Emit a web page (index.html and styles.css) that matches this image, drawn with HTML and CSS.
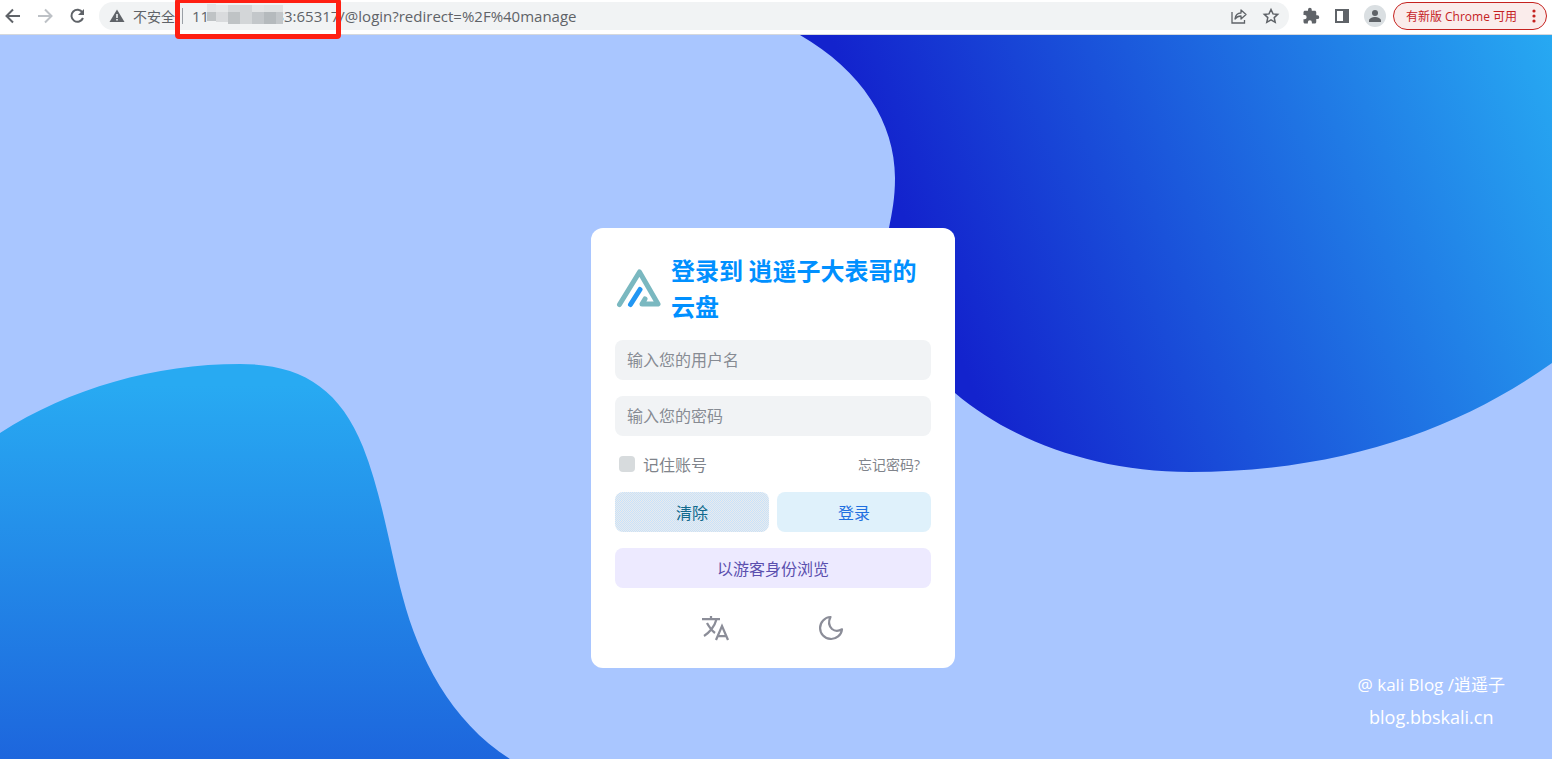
FILE: index.html
```html
<!DOCTYPE html>
<html lang="zh-CN">
<head>
    <meta charset="utf-8">
    <title>登录</title>
    <link rel="stylesheet" href="styles.css">
</head>
<body>
    <header class="toolbar">
        <button type="button" class="tool" aria-label="后退">
            <svg width="20" height="20" viewBox="0 0 20 20" fill="none" stroke="#5f6368" stroke-width="2"><path d="M17 10H4M10 3.500L3.500 10l6.500 6.500"/></svg>
        </button>
        <button type="button" class="tool" aria-label="前进">
            <svg width="20" height="20" viewBox="0 0 20 20" fill="none" stroke="#bdc1c6" stroke-width="2"><path d="M3 10h13M10 3.500l6.500 6.500-6.500 6.500"/></svg>
        </button>
        <button type="button" class="tool" aria-label="重新加载">
            <svg width="20" height="20" viewBox="0 0 20 20"><path d="M15.500 6.500A6 6 0 1 0 16 12" fill="none" stroke="#5f6368" stroke-width="2"/><path d="M17 3v6h-6z" fill="#5f6368"/></svg>
        </button>

        <div class="omnibox">
            <svg width="16" height="16" viewBox="0 0 16 16"><path d="M8 1.500L15.500 14H.5z" fill="#5f6368"/><path d="M7.200 6h1.600v4H7.200zM7.200 11h1.600v1.600H7.200z" fill="#f1f3f4"/></svg>
            <span class="insecure">不安全</span>
            <span class="divider"></span>
            <input type="text" class="url" aria-label="地址" value="11                 33:65317/@login?redirect=%2F%40manage">
            <button type="button" class="tool" aria-label="分享">
                <svg width="18" height="18" viewBox="0 0 18 18" fill="none" stroke="#5f6368" stroke-width="1.300"><path d="M2 5v11h12.500v-3"/><path d="M5 12c.5-4 3-6 6-6V3l5 4.500-5 4.500V9c-3 0-4.500 1-6 3z" stroke-linejoin="round"/></svg>
            </button>
            <button type="button" class="tool" aria-label="收藏">
                <svg width="18" height="18" viewBox="0 0 18 18" fill="none" stroke="#5f6368" stroke-width="1.500"><path d="M9 2.500l2 4.400 4.700.5-3.500 3.200 1 4.700L9 12.900l-4.200 2.400 1-4.700-3.500-3.200 4.700-.5z"/></svg>
            </button>
            <!-- blurred host -->
            <svg class="mosaic" width="76" height="20" viewBox="0 0 76 20">
                <path d="M0 0h9v8H0z" fill="#e2e4e6"/>
                <path d="M0 8h9v9H0z" fill="#bfc3c5"/>
                <path d="M9 1h12v7H9z" fill="#e6e8e9"/>
                <path d="M9 8h12v10H9z" fill="#d9dbdd"/>
                <path d="M21 1h12v7H21z" fill="#d6d9db"/>
                <path d="M21 8h12v12H21z" fill="#bfc3c5"/>
                <path d="M33 1h12v19H33z" fill="#d3d6d8"/>
                <path d="M45 1h12v7H45z" fill="#e3e5e6"/>
                <path d="M45 8h12v12H45z" fill="#c3c7ca"/>
                <path d="M57 1h19v7H57z" fill="#dfe2e3"/>
                <path d="M57 8h12v12H57z" fill="#b5babd"/>
                <path d="M69 8h7v12h-7z" fill="#c3c7ca"/>
            </svg>
            <span class="highlight"></span>
        </div>

        <div class="actions">
            <button type="button" class="tool" aria-label="扩展程序">
                <svg width="18" height="18" viewBox="0 0 24 24"><path d="M20.500 11H19V7c0-1.100-.9-2-2-2h-4V3.500a2.500 2.500 0 0 0-5 0V5H4c-1.100 0-2 .9-2 2v3.800h1.500a2.700 2.700 0 0 1 0 5.400H2V20c0 1.100.9 2 2 2h3.800v-1.500a2.700 2.700 0 0 1 5.400 0V22H17c1.100 0 2-.9 2-2v-4h1.500a2.500 2.500 0 0 0 0-5z" fill="#5f6368"/></svg>
            </button>
            <button type="button" class="tool" aria-label="侧边栏">
                <svg width="18" height="18" viewBox="0 0 18 18"><path d="M2 2h14v14H2zM4 4v10h6V4z" fill="#5f6368" fill-rule="evenodd"/></svg>
            </button>
            <button type="button" class="tool" aria-label="个人资料">
                <svg width="22" height="22" viewBox="0 0 22 22"><circle cx="11" cy="11" r="11" fill="#dadfe2"/><circle cx="11" cy="8" r="3" fill="#5f6368"/><path d="M5 17v-1.500c0-2.200 3.500-3.500 6-3.500s6 1.300 6 3.500V17z" fill="#5f6368"/></svg>
            </button>
        </div>
        <button type="button" class="update">
            有新版 Chrome 可用
            <svg width="4" height="14" viewBox="0 0 4 14" fill="#c5221f"><circle cx="2" cy="2" r="1.600"/><circle cx="2" cy="7" r="1.600"/><circle cx="2" cy="12" r="1.600"/></svg>
        </button>
    </header>

    <main class="page">
        <svg class="background" viewBox="0 0 1552 724" preserveAspectRatio="xMidYMid slice">
            <defs>
                <linearGradient id="right" gradientUnits="userSpaceOnUse" x1="890" y1="150" x2="1511" y2="-101">
                    <stop offset="0" stop-color="#1323cd"/>
                    <stop offset="1" stop-color="#27a9f2"/>
                </linearGradient>
                <linearGradient id="left" gradientUnits="userSpaceOnUse" x1="0" y1="350" x2="0" y2="724">
                    <stop offset="0" stop-color="#28aaf2"/>
                    <stop offset="1" stop-color="#1d66dd"/>
                </linearGradient>
            </defs>
            <path fill="url(#right)" d="M800 0C862 36 895 88 895 143C895 163 892 178 889 193C875 255 890 305 955 358C1010 405 1095 437 1190 437C1340 437 1460 394 1552 328V0z"/>
            <path fill="url(#left)" d="M0 398C70 353 155 329 240 329C300 329 339 352 363 412C382 460 390 515 403 563C418 620 450 686 510 724H0z"/>
        </svg>

        <form class="card">
            <div class="heading">
                <svg width="48" height="48" viewBox="0 0 48 48" fill="none" stroke-width="5" stroke-linecap="round" stroke-linejoin="round">
                    <path stroke="#7ab8c0" d="M4.500 40.500L24.500 8 43 40H27l3-5"/>
                    <path stroke="#2196f3" d="M15.500 40.500L25 25.500"/>
                </svg>
                <h1>登录到 逍遥子大表哥的云盘</h1>
            </div>
            <input type="text" class="field" placeholder="输入您的用户名" aria-label="用户名">
            <input type="password" class="field" placeholder="输入您的密码" aria-label="密码">
            <div class="options">
                <label class="remember"><input type="checkbox">记住账号</label>
                <a href="#" class="forgot">忘记密码?</a>
            </div>
            <div class="buttons">
                <button type="reset" class="btn clear">清除</button>
                <button type="submit" class="btn login">登录</button>
            </div>
            <button type="button" class="btn guest">以游客身份浏览</button>
            <div class="switches">
                <button type="button" class="tool" aria-label="语言">
                    <svg width="32" height="32" viewBox="0 0 512 512" fill="none" stroke="#8b8d98" stroke-width="36"><path d="M48 112h288M192 64v48M272 448l96-224 96 224M301.500 384h133M281.300 112S257 206 199 277 80 384 80 384M256 336s-35-27-72-75-56-85-56-85"/></svg>
                </button>
                <button type="button" class="tool" aria-label="深色模式">
                    <svg width="32" height="32" viewBox="0 0 32 32" fill="none" stroke="#8b8d98" stroke-width="2.200" stroke-linejoin="round"><path d="M15.500 5A11 11 0 1 0 27 17.300C23 19.500 19.500 19 17 17C13.500 13.500 13.500 9 15.500 5z"/></svg>
                </button>
            </div>
        </form>

        <div class="watermark">
            <span>@ kali Blog /逍遥子</span>
            <span class="site">blog.bbskali.cn</span>
        </div>
    </main>
</body>
</html>
```
FILE: styles.css
```css
* { box-sizing: border-box; }
body { margin: 0; min-height: 100vh; display: flex; flex-direction: column; font-family: "Open Sans", "Noto Sans CJK SC", sans-serif; font-size: 16px; }
button, input { font: inherit; border: 0; padding: 0; background: none; }
button { cursor: pointer; }
svg { display: block; flex: none; }
.tool { display: flex; }

/* browser toolbar */
.toolbar { position: relative; z-index: 1; display: flex; align-items: center; height: 35px; padding: 0 5px 3px 3px; gap: 12px; background: #fff; border-bottom: 1px solid #d5d8dc; }
.omnibox { position: relative; flex: 1; display: flex; align-items: center; height: 28px; padding: 0 9px 0 10px; border-radius: 14px; background: #f1f3f4; color: #5f6368; }
.insecure { margin-left: 8px; font-size: 14px; }
.divider { width: 1px; height: 16px; margin: 0 9px 0 7px; background: #9aa0a6; }
.url { flex: 1; min-width: 0; font-size: 15px; color: #5f6368; outline: none; }
.omnibox .tool { margin-left: 14px; }
.mosaic { position: absolute; left: 108px; top: 2px; }
.highlight { position: absolute; left: 76px; top: -4px; width: 166px; height: 41px; border: 5px solid #ff1f12; border-radius: 4px; }
.actions { display: flex; align-items: center; gap: 13px; margin-left: 1px; }
.update { display: flex; align-items: center; gap: 15px; height: 28px; padding: 0 10px 0 12px; margin-left: -5px; border: 1px solid #c5221f; border-radius: 14px; background: #faeceb; color: #c5221f; font-size: 12px; white-space: nowrap; }

/* login page */
.page { position: relative; flex: 1; display: flex; justify-content: center; align-items: flex-start; padding: 193px 6px 91px 0; background: #a9c6ff; overflow: hidden; }
.background { position: absolute; left: 0; top: 0; width: 100%; height: 100%; }
.card { position: relative; display: flex; flex-direction: column; gap: 16px; width: 364px; padding: 24px; border-radius: 12px; background: #fff; }
.heading { display: flex; align-items: center; gap: 8px; }
h1 { margin: 0; font-family: "Noto Sans CJK SC", sans-serif; font-size: 24px; line-height: 36px; color: #0090ff; }
.field { height: 40px; padding: 0 12px; border-radius: 8px; background: #f1f3f5; outline: none; }
.field::placeholder { color: #878b93; opacity: 1; }
.options { display: flex; justify-content: space-between; align-items: center; height: 24px; padding: 0 11px 0 4px; color: #80848b; }
.remember { display: flex; align-items: center; gap: 8px; }
.remember input { appearance: none; width: 16px; height: 16px; margin: 0; border-radius: 4px; background: #d7dbdd; }
.forgot { font-size: 14px; color: inherit; text-decoration: none; }
.buttons { display: flex; gap: 8px; }
.btn { flex: 1 0 auto; height: 40px; border-radius: 8px; }
.clear { background: repeating-conic-gradient(#c6e2fb 0 25%, #ebebec 0 50%) 0 0 / 2px 2px; color: #11698c; }
.login { background: #dff1fb; color: #1f6fe0; }
.guest { background: #edeaff; color: #5a4fae; }
.switches { display: flex; justify-content: space-evenly; padding-top: 8px; }
.watermark { position: absolute; right: 47px; bottom: 26px; display: flex; flex-direction: column; align-items: center; color: #fff; font-size: 17px; line-height: 32px; }
.site { font-size: 18px; }
```
